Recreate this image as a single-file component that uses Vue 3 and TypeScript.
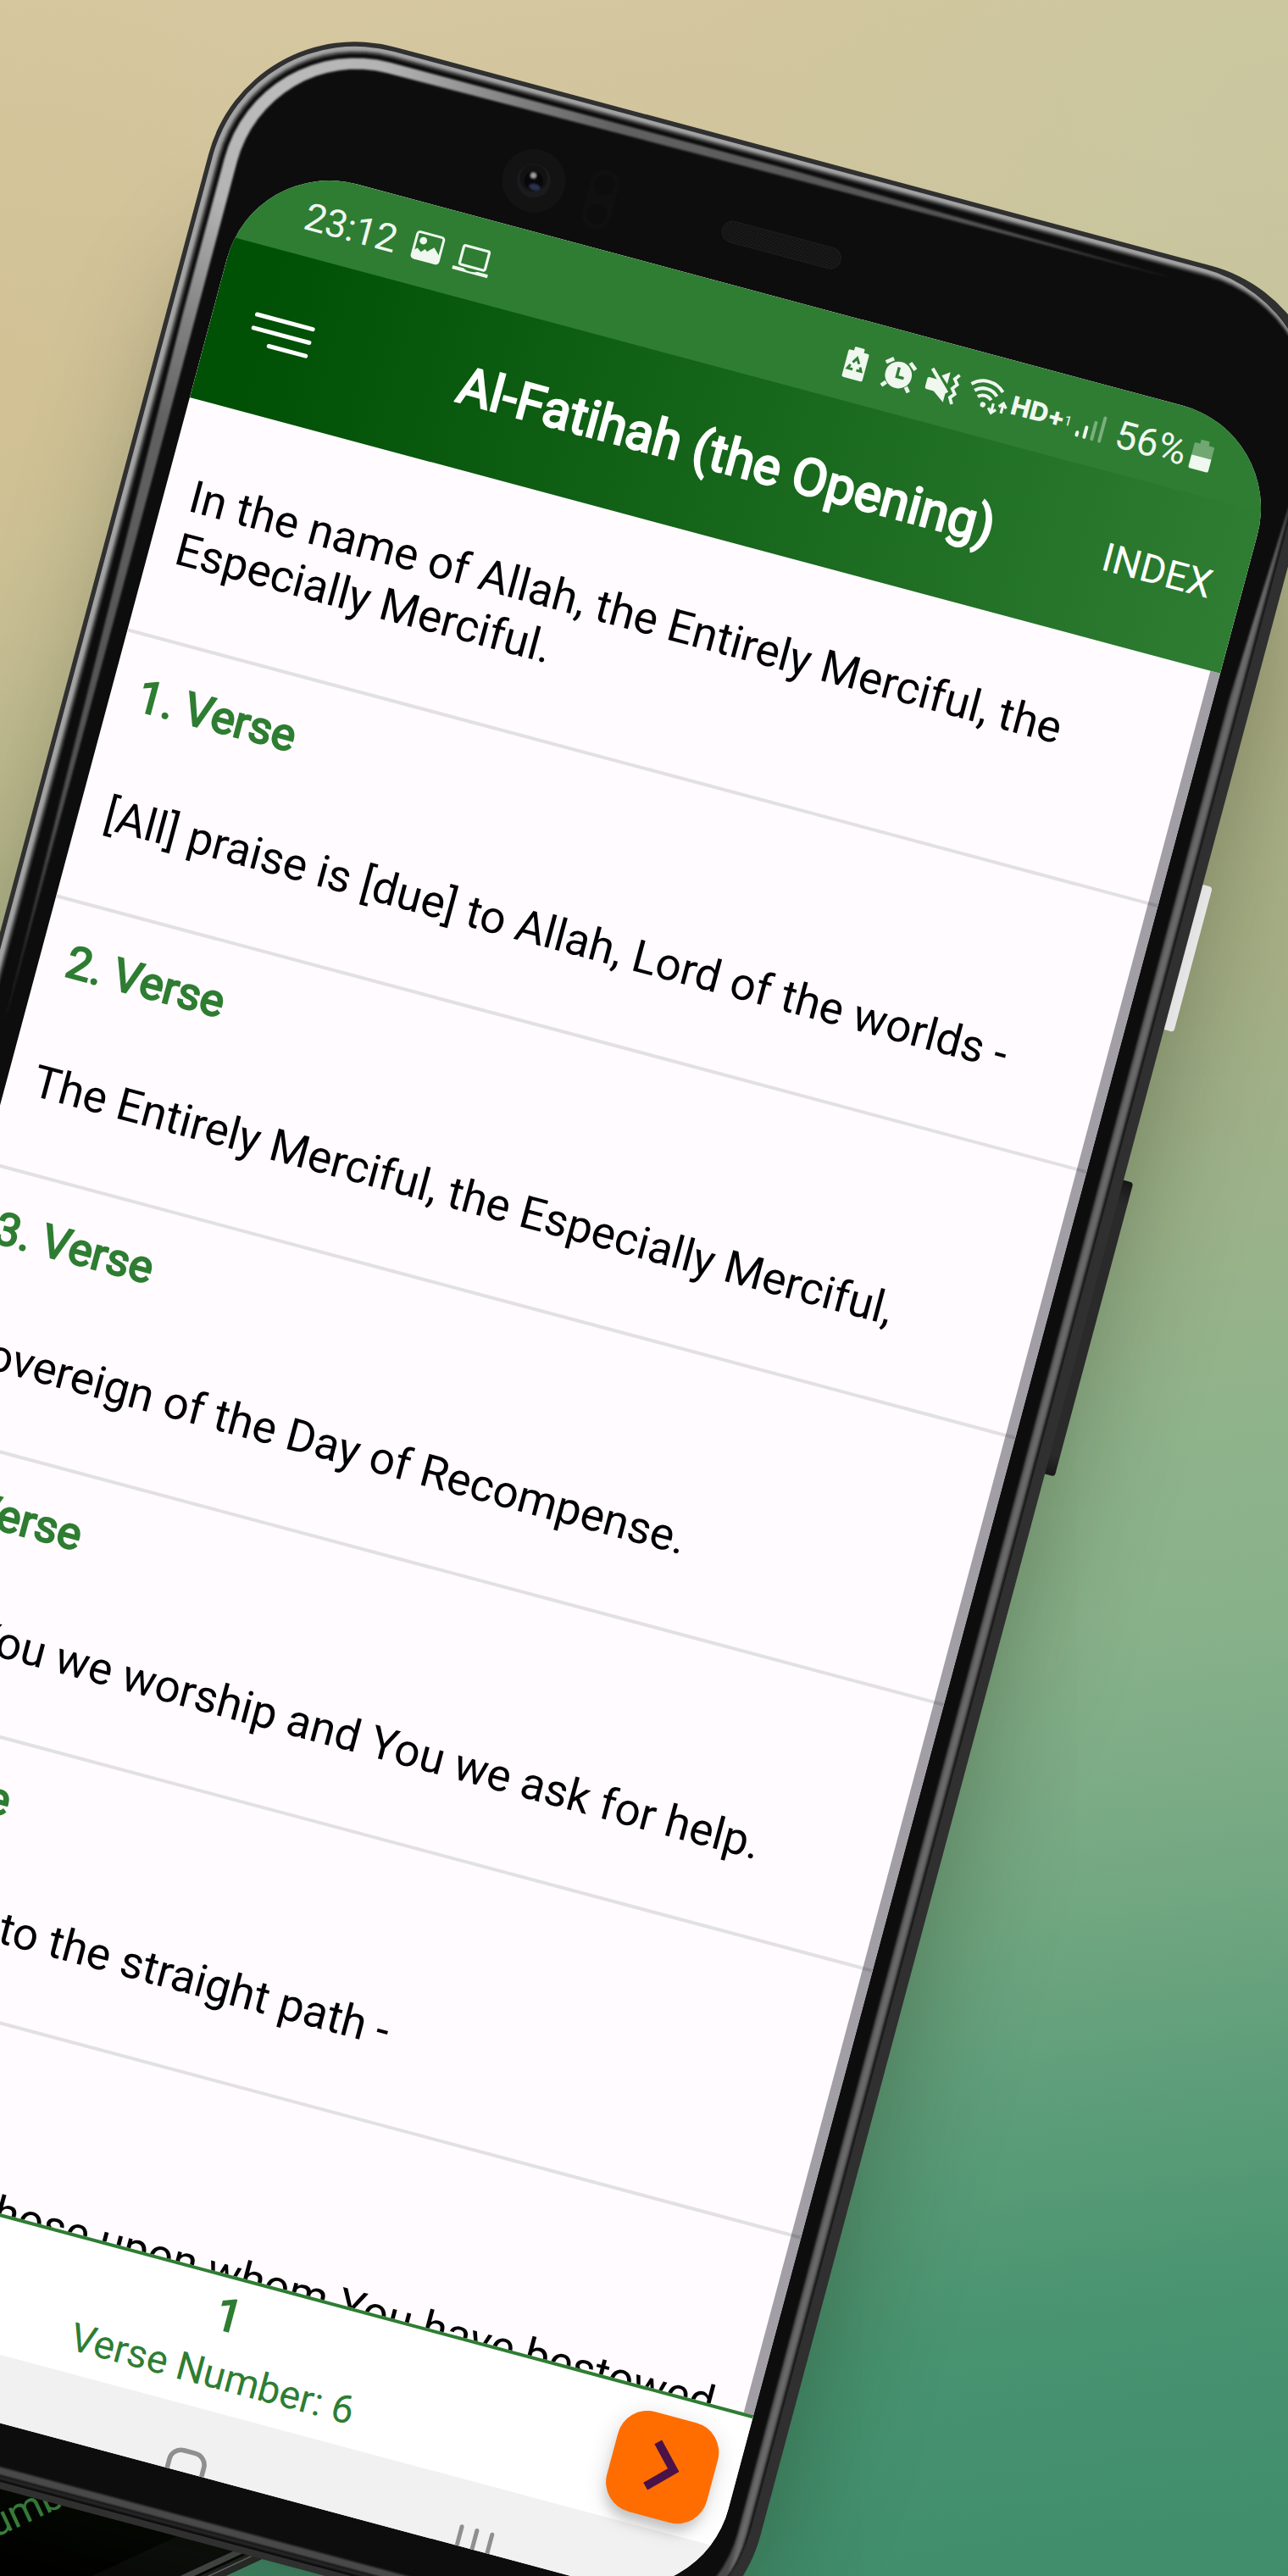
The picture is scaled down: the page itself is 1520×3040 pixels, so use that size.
<script setup lang="ts">
interface Verse {
  id: number
  text: string
}

const opening = ['In the name of Allah, the Entirely Merciful, the', 'Especially Merciful.']

const verses: Verse[] = [
  { id: 1, text: '[All] praise is [due] to Allah, Lord of the worlds -' },
  { id: 2, text: 'The Entirely Merciful, the Especially Merciful,' },
  { id: 3, text: 'Sovereign of the Day of Recompense.' },
  { id: 4, text: 'It is You we worship and You we ask for help.' },
  { id: 5, text: 'Guide us to the straight path -' },
  { id: 6, text: 'The path of those upon whom You have bestowed' },
]
</script>

<template>
  <div class="stage">
    <!-- second device, mostly hidden behind the main one -->
    <div class="back">
      <svg class="back-art" viewBox="-500 -400 800 400" width="800" height="400">
        <rect x="-500" y="-400" width="800" height="400" fill="#2b2b2b" />
        <rect x="-500" y="-400" width="800" height="392" fill="#777" />
        <rect x="-500" y="-400" width="800" height="390.6" fill="#232323" />
        <rect x="-500" y="-400" width="800" height="387" fill="#030303" />
        <rect x="-500" y="-400" width="800" height="384" fill="#4b4b4b" />
        <rect x="-500" y="-400" width="800" height="377" fill="#0a0a0a" />
        <rect x="-500" y="-400" width="800" height="333" fill="#000" />
      </svg>
      <div class="back-label">Verse Number: 6</div>
    </div>

    <div class="phone">
      <div class="glow"></div>
      <svg class="body" viewBox="-80 -200 1420 2980" width="1420" height="2980">
        <defs>
          <linearGradient id="rim" gradientUnits="userSpaceOnUse" x1="1150" y1="-160" x2="1290" y2="-20">
            <stop offset="0" stop-color="#a2a2a2" />
            <stop offset="0.6" stop-color="#8a8a8a" />
            <stop offset="1" stop-color="#0a0a0a" />
          </linearGradient>
          <linearGradient id="rim2" gradientUnits="userSpaceOnUse" x1="1150" y1="-160" x2="1290" y2="-20">
            <stop offset="0" stop-color="#6c6c6c" />
            <stop offset="0.6" stop-color="#5a5a5a" />
            <stop offset="1" stop-color="#0a0a0a" />
          </linearGradient>
          <radialGradient id="shine" gradientUnits="userSpaceOnUse" cx="20" cy="-60" r="1150">
            <stop offset="0" stop-color="#bcbcbc" />
            <stop offset="0.11" stop-color="#b4b4b4" />
            <stop offset="0.24" stop-color="#808080" />
            <stop offset="0.34" stop-color="#626262" />
            <stop offset="0.75" stop-color="#505050" />
            <stop offset="1" stop-color="#222" />
          </radialGradient>
          <linearGradient id="side" gradientUnits="userSpaceOnUse" x1="1277" y1="0" x2="1288" y2="0">
            <stop offset="0" stop-color="#4a4a4a" />
            <stop offset="0.5" stop-color="#707070" />
            <stop offset="1" stop-color="#555" />
          </linearGradient>
          <linearGradient id="btnW" x1="0" y1="0" x2="1" y2="0">
            <stop offset="0" stop-color="#8d8d8d" />
            <stop offset="0.45" stop-color="#e2e2e2" />
            <stop offset="1" stop-color="#e6e6e6" />
          </linearGradient>
          <linearGradient id="btnD" x1="0" y1="0" x2="0" y2="1">
            <stop offset="0" stop-color="#161616" />
            <stop offset="0.08" stop-color="#2a2a2a" />
            <stop offset="0.93" stop-color="#2a2a2a" />
            <stop offset="1" stop-color="#181818" />
          </linearGradient>
          <pattern id="mesh" width="4" height="4" patternUnits="userSpaceOnUse">
            <rect width="4" height="4" fill="#0f0f0f" />
            <circle cx="1" cy="1" r="0.9" fill="#242424" />
            <circle cx="3" cy="3" r="0.9" fill="#242424" />
          </pattern>
          <filter id="soft" x="-5%" y="-5%" width="110%" height="110%"><feGaussianBlur stdDeviation="0.8" /></filter>
        </defs>

        <rect x="1296" y="540" width="19.5" height="177" rx="4" fill="url(#btnW)" />
        <rect x="1296" y="901" width="19.5" height="359" rx="4" fill="url(#btnD)" />

        <rect x="-52.8" y="-168" width="1356.4" height="2904" rx="179" fill="#303030" />
        <rect x="-47.5" y="-162.5" width="1338" height="2890.5" rx="174" fill="url(#rim)" />
        <g filter="url(#soft)">
          <rect x="-42" y="-158" width="1331.5" height="2884" rx="169" fill="url(#rim2)" />
          <rect x="-40.5" y="-156.5" width="1330" height="2881" rx="168" fill="#3a3a3a" />
          <rect x="-38.5" y="-154.5" width="1327.5" height="2877.5" rx="166" fill="#0a0a0a" />
        </g>
        <rect x="-33.5" y="-149" width="1321.5" height="2869" rx="160" fill="#0d0d0d" />
        <g filter="url(#soft)">
          <path
            d="M-20 1080 L-33.5 200 V11 A160 160 0 0 1 126 -149 H620 L1090 -142 L620 -139.5 L126 -136 A145 147 0 0 0 -18 11 V400 Z"
            fill="url(#shine)"
          />
          <path
            d="M1288 40 V2560 A160 160 0 0 1 1128 2720 H-60 V2711 H1127 A150 150 0 0 0 1277 2560 V320 Z"
            fill="url(#side)"
          />
        </g>

        <!-- camera, sensors and speaker -->
        <circle cx="326" cy="-58" r="37.5" fill="#131313" />
        <circle cx="326" cy="-58" r="20" fill="#1b1b1d" />
        <circle cx="325" cy="-61" r="16" fill="#121213" />
        <circle cx="326" cy="-58" r="11" fill="#08080b" />
        <ellipse cx="329" cy="-51" rx="7" ry="4" fill="#2b3150" filter="url(#soft)" />
        <circle cx="324" cy="-64" r="3.8" fill="#a0a0a2" filter="url(#soft)" />
        <rect x="391" y="-93" width="34" height="72" rx="17" fill="#101010" />
        <circle cx="408" cy="-75" r="12" fill="#0d0d0d" />
        <circle cx="408" cy="-39" r="12" fill="#0d0d0d" />
        <rect x="556" y="-73" width="144" height="25" rx="12" fill="url(#mesh)" stroke="#1e1e1e" />
      </svg>

      <div class="screen">
        <div class="status">
          <span class="time">23:12</span>
          <svg class="st-left" viewBox="200 28 110 46" width="110" height="46">
            <rect x="209.7" y="34.8" width="32" height="31.4" rx="3" fill="none" stroke="#eff7ef" stroke-width="3" />
            <circle cx="218.5" cy="44" r="4.4" fill="#eff7ef" />
            <path d="M209 58.5 L214 54 L219 57.5 L223 53 L226 55.5 L233 48.5 L242 57.5 V64 Q242 67 239 67 H212 Q209 67 209 64Z" fill="#eff7ef" />
            <rect x="266.5" y="36.5" width="31" height="23" rx="2" fill="none" stroke="#eff7ef" stroke-width="3.2" />
            <path d="M259.5 63 H273 Q275 65 281 65 Q287 65 289 63 H302.5 V67.2 H259.5Z" fill="#eff7ef" />
          </svg>

          <svg class="st-icons" viewBox="730 26 210 50" width="210" height="50">
            <g fill="#eff7ef">
              <path d="M743 37.5 V34 Q743 32.8 744.2 32.8 H753.8 Q755 32.8 755 34 V37.5 H759.6 Q761.6 37.5 761.6 39.5 V69 Q761.6 71 759.6 71 H738.6 Q736.6 71 736.6 69 V39.5 Q736.6 37.5 738.6 37.5Z" />
              <circle cx="801" cy="52" r="15.8" />
            </g>
            <g fill="none" stroke="#2e7d32" stroke-width="3">
              <path d="M745.2 51.5 L749 45.5 L752.8 51.5" />
              <path d="M755 55 L757.2 59.5 H751.5" />
              <path d="M747 59.5 H740.8 L743.2 54.6" />
            </g>
            <path d="M799.7 43 V54.3 H808" fill="none" stroke="#2e7d32" stroke-width="3.4" />
            <g fill="none" stroke="#eff7ef" stroke-width="4.6">
              <path d="M783 41 L791 34.5" />
              <path d="M811 34.5 L819 41" />
              <path d="M789 63.5 L784.5 69" />
              <path d="M813 63.5 L817.5 69" />
            </g>
            <g fill="#eff7ef">
              <path d="M837 45 H847 L860 56 V69.5 L846 59.5 H838 Q835 59.5 835 56.5 V47 Q835 45 837 45Z" />
              <path d="M850.5 39.5 L859.5 33 V47.5Z" />
            </g>
            <path d="M838 34 L861.5 57.5" stroke="#eff7ef" stroke-width="4.2" />
            <path d="M871 33.5 L866.5 39.5 L871 45 L866.5 51 L871 56.5 L866.5 62 L870.5 69" fill="none" stroke="#eff7ef" stroke-width="3.8" />
            <g fill="none" stroke="#eff7ef" stroke-width="4">
              <path d="M887 39.8 A27.3 27.3 0 0 1 925.4 39.8" />
              <path d="M892.6 46.4 A19 19 0 0 1 919.8 46.4" />
              <path d="M898 52.4 A11.5 11.5 0 0 1 914.4 52.4" />
            </g>
            <circle cx="906.2" cy="60" r="3.2" fill="#eff7ef" />
            <g fill="none" stroke="#eff7ef" stroke-width="3.2">
              <path d="M918 55.5 V66 M913.4 62 L918 67 L922.6 62" />
              <path d="M929.5 64.5 V53 M925 57.5 L929.5 52.4 L934 57.5" />
            </g>
          </svg>
          <span class="hd">HD+</span>
          <span class="sim">1</span>
          <svg class="st-signal" viewBox="1018 28 38 44" width="38" height="44">
            <g stroke="#eff7ef" stroke-width="4" stroke-linecap="round">
              <path d="M1022.4 62.8 V66" />
              <path d="M1031.6 54.2 V66" />
              <path d="M1040.8 46 V66" opacity="0.4" />
              <path d="M1050 38 V66" opacity="0.4" />
            </g>
          </svg>
          <span class="pct">56%</span>
          <svg class="st-batt" viewBox="1156 30 32 42" width="32" height="42">
            <path d="M1166 38 V34.5 Q1166 33 1167.5 33 H1175 Q1176.5 33 1176.5 34.5 V38 H1182 Q1183.6 38 1183.6 39.6 V53 H1159.4 V39.6 Q1159.4 38 1161 38Z" fill="#eff7ef" opacity="0.35" />
            <path d="M1159.4 53 H1183.6 V67 Q1183.6 69 1181.6 69 H1161.4 Q1159.4 69 1159.4 67Z" fill="#eff7ef" />
          </svg>
        </div>

        <header class="bar">
          <svg class="menu" viewBox="46 174 80 42" width="80" height="42">
            <path d="M51.5 178.8 H119.5 M51.5 195.2 H119.5 M74.5 211.4 H119.5" stroke="#fff" stroke-width="5" stroke-linecap="round" />
          </svg>
          <h1 class="title">Al-Fatihah (the Opening)</h1>
          <span class="index">INDEX</span>
        </header>

        <main class="list">
          <section class="opening">
            <div v-for="line in opening" :key="line">{{ line }}</div>
          </section>
          <section v-for="v in verses" :key="v.id" class="verse">
            <div class="label">{{ v.id }}. Verse</div>
            <div class="text">{{ v.text }}</div>
          </section>
          <div class="scrollbar"></div>
        </main>

        <footer class="foot">
          <div class="count">1</div>
          <div class="number">Verse Number: 6</div>
          <div class="fab">
            <svg viewBox="0 0 122 122" width="122" height="122">
              <path d="M48.5 33.5 L74.5 61 L47.5 88" fill="none" stroke="#4a1248" stroke-width="10" />
            </svg>
          </div>
        </footer>

        <nav class="nav">
          <svg viewBox="595 2625 410 36" width="410" height="36">
            <rect x="606.5" y="2635" width="42" height="44" rx="14" fill="none" stroke="#8f8f8f" stroke-width="5.6" />
            <path d="M960.6 2637 V2680 M979 2637 V2680 M997.5 2637 V2680" stroke="#8f8f8f" stroke-width="5" stroke-linecap="round" />
          </svg>
        </nav>
      </div>
    </div>
  </div>
</template>

<style>
html,
body {
  margin: 0;
  padding: 0;
  overflow: hidden;
}
</style>

<style scoped>
.stage {
  position: relative;
  width: 1520px;
  height: 3040px;
  overflow: hidden;
  font-family: Roboto, 'Liberation Sans', sans-serif;
  background:
    radial-gradient(ellipse 420px 620px at 0 520px, rgba(216, 190, 140, 0.5), rgba(216, 190, 140, 0) 100%),
    radial-gradient(ellipse 700px 500px at 1520px 120px, rgba(198, 200, 160, 0.7), rgba(198, 200, 160, 0) 100%),
    linear-gradient(
      172deg,
      #d6c79f 0%,
      #cfc49d 12%,
      #c4c29a 20%,
      #b2b48a 32%,
      #a6b087 42%,
      #9cb28a 50%,
      #8fb38b 58%,
      #88b18a 65%,
      #76a983 73%,
      #5f9e7a 81%,
      #489370 90%,
      #3f8d6b 100%
    );
}

.back {
  position: absolute;
  left: 266.5px;
  top: 3040px;
  width: 0;
  height: 0;
  transform: rotate(-25deg);
  transform-origin: 0 0;
}
.back-art {
  position: absolute;
  left: -500px;
  top: -400px;
}
.back-label {
  position: absolute;
  left: -391px;
  top: -199px;
  font-size: 46.6px;
  line-height: 54px;
  white-space: nowrap;
  color: #3e8f43;
}

.phone {
  position: absolute;
  left: 300.1px;
  top: 185px;
  width: 1259px;
  height: 2661px;
  transform: rotate(15deg);
  transform-origin: 0 0;
}
.glow {
  position: absolute;
  left: -30px;
  top: 20px;
  width: 1320px;
  height: 2700px;
  border-radius: 179px;
  box-shadow: 16px 40px 140px rgba(20, 30, 10, 0.36);
}
.body {
  position: absolute;
  left: -80px;
  top: -200px;
}

.screen {
  position: relative;
  display: flex;
  flex-direction: column;
  width: 1259px;
  height: 2661px;
  border-radius: 125px;
  overflow: hidden;
  background: #fffbff;
}

.status {
  position: relative;
  z-index: 1;
  flex: none;
  display: flex;
  align-items: flex-start;
  height: 98.4px;
  background: #2e7d32;
  color: #eff7ef;
}
.time {
  width: 123.5px;
  padding-left: 76.5px;
  margin-top: 25px;
  font-size: 45.4px;
  line-height: 54px;
  letter-spacing: -0.4px;
  white-space: nowrap;
}
.st-left {
  margin-top: 28px;
}
.st-icons {
  margin: 26px 0 0 420px;
}
.hd {
  width: 65px;
  margin-left: -1px;
  margin-top: 32px;
  font-family: Inter, 'Open Sans', sans-serif;
  font-weight: 800;
  font-size: 30.5px;
  line-height: 38px;
  letter-spacing: -0.1px;
  white-space: nowrap;
}
.sim {
  width: 14px;
  margin-top: 43px;
  font-size: 16px;
  line-height: 20px;
}
.st-signal {
  margin-top: 28px;
}
.pct {
  width: 89px;
  margin-top: 25px;
  padding-left: 11px;
  font-size: 46px;
  line-height: 54px;
  white-space: nowrap;
}
.st-batt {
  margin-top: 30px;
}

.bar {
  flex: none;
  display: grid;
  grid-template-columns: 240px 1fr 240px;
  box-sizing: border-box;
  height: 199.6px;
  margin-top: -4px;
  padding-top: 4px;
  color: #fff;
  background: linear-gradient(90deg, #005005 5%, #2e7d32 100%);
}
.menu {
  margin: 75.6px 0 0 46px;
}
.title {
  margin: 63px 0 0;
  text-align: center;
  font-size: 60.8px;
  line-height: 72px;
  font-weight: 400;
  -webkit-text-stroke: 2.4px #fff;
  white-space: nowrap;
}
.index {
  margin-top: 71px;
  padding-right: 37px;
  text-align: right;
  font-size: 46.6px;
  line-height: 54px;
}

.list {
  position: relative;
  flex: none;
  height: 2129px;
  overflow: hidden;
  color: #000;
  font-size: 53.2px;
  line-height: 64px;
}
.opening {
  box-sizing: border-box;
  height: 285.6px;
  padding: 80.4px 31px 0;
  border-bottom: 4px solid #e1e1e1;
  white-space: nowrap;
}
.verse {
  box-sizing: border-box;
  height: 325.4px;
  padding: 37px 31px 0;
  border-bottom: 4px solid #e1e1e1;
  white-space: nowrap;
}
.label {
  margin-bottom: 81.6px;
  padding-left: 1.5px;
  font-size: 53.1px;
  -webkit-text-stroke: 2.1px #2e7d32;
  color: #2e7d32;
}
.scrollbar {
  position: absolute;
  top: 0;
  right: 0;
  width: 12px;
  height: 100%;
  background: rgba(0, 0, 10, 0.37);
}

.foot {
  position: relative;
  z-index: 1;
  flex: none;
  box-sizing: border-box;
  height: 161.5px;
  margin-top: -1px;
  border-top: 4px solid #2e7d32;
  background: #fff;
  color: #2e7d32;
  text-align: center;
}
.count {
  margin-top: 11.5px;
  padding-left: 2px;
  font-size: 53px;
  line-height: 64px;
  -webkit-text-stroke: 2.1px #2e7d32;
}
.number {
  margin-top: 12px;
  font-size: 46.6px;
  line-height: 54px;
}
.fab {
  position: absolute;
  left: 1110px;
  top: 22.5px;
  width: 122px;
  height: 122px;
  border-radius: 36px;
  background: #ff6d00;
  box-shadow:
    0 14px 14px -4px rgba(0, 0, 0, 0.16),
    0 6px 28px rgba(0, 0, 0, 0.14);
}
.fab svg {
  display: block;
}

.nav {
  flex: 1;
  padding: 42.5px 0 0 595px;
  background: #f1f1f1;
}
.nav svg {
  display: block;
}
</style>
